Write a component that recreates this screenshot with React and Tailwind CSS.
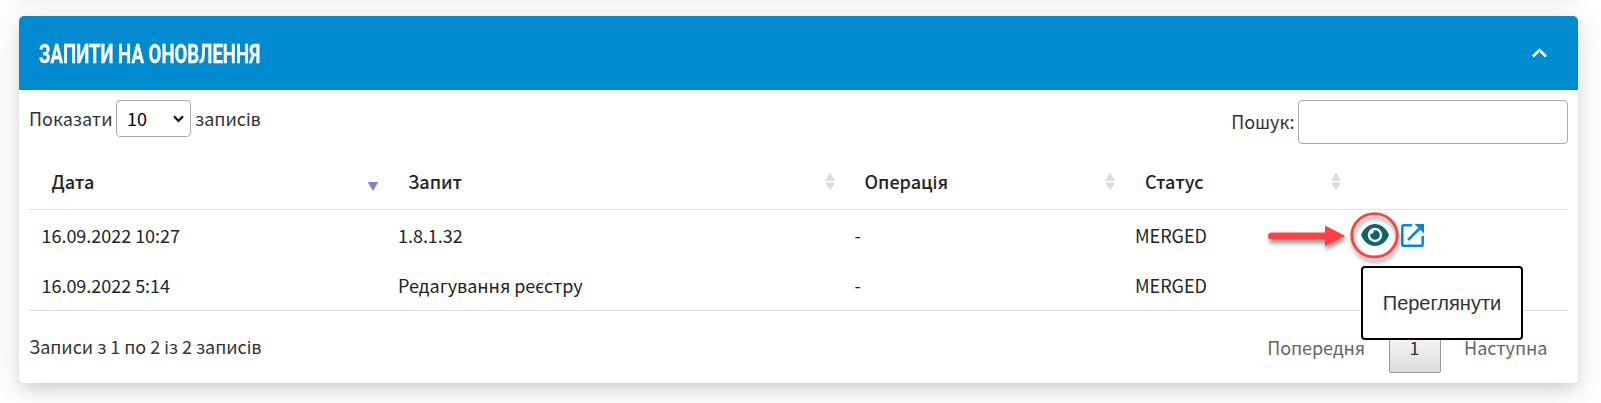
import React from "react";

const columns = [
  { title: "Дата", sort: "desc" },
  { title: "Запит", sort: "both" },
  { title: "Операція", sort: "both" },
  { title: "Статус", sort: "both" },
  { title: "", sort: null },
];

const rows = [
  ["16.09.2022 10:27", "1.8.1.32", "-", "MERGED"],
  ["16.09.2022 5:14", "Редагування реєстру", "-", "MERGED"],
];

const grid = "grid grid-cols-[356.500px_456.500px_280.500px_226px_1fr]";

function SortIcon({ kind }) {
  if (!kind) return null;
  return (
    <svg width="12" height="19" viewBox="0 0 12 19" className="shrink-0">
      {kind === "both" && (
        <>
          <path d="M6 0.5 11 9H1z" fill="#dcdcdc" />
          <path d="M1 10.500h10L6 18.500z" fill="#dcdcdc" />
        </>
      )}
      {kind === "desc" && <path d="M0.700 10h10.600L6 19z" fill="#7f7fe0" />}
    </svg>
  );
}

function EyeIcon() {
  return (
    <svg width="28" height="24" viewBox="0 0 28 24" className="block">
      <path d="M0 12C2.800 5 8 1 14 1s11.200 4 14 11c-2.800 7-8 11-14 11S2.800 19 0 12z" fill="#10646e" />
      <circle cx="14" cy="12" r="7.200" fill="#fff" />
      <path d="M14 7.200a4.800 4.800 0 1 1-4.800 4.800c0-.5.1-.9.200-1.300a2.600 2.600 0 0 0 3.300-3.300c.4-.1.8-.2 1.300-.2z" fill="#10646e" />
    </svg>
  );
}

function ExternalIcon() {
  return (
    <svg width="23" height="23" viewBox="0 0 23 23" className="block" fill="none" stroke="#008bd2" strokeWidth="2.500">
      <path d="M11 1.300H2.300a1 1 0 0 0-1 1v18.400a1 1 0 0 0 1 1h18.400a1 1 0 0 0 1-1V12" />
      <path d="M7 16 20 3" />
      <path d="M13.500 0H23v9.500z" fill="#008bd2" stroke="none" />
    </svg>
  );
}

function Callout() {
  return (
    <svg
      width="140"
      height="60"
      viewBox="0 0 140 60"
      className="pointer-events-none absolute -left-[85px] -top-[11px] drop-shadow-[1px_4px_2px_rgba(0,0,0,0.4)]"
    >
      <path d="M7.500 20.500H61V13.500L81.500 24 61 34V27.500H7.500a3.500 3.500 0 0 1 0-7z" fill="#ff4141" />
      <ellipse cx="110.500" cy="23.300" rx="22.700" ry="21.700" fill="none" stroke="#ff4141" strokeWidth="2.800" />
    </svg>
  );
}

export default function App() {
  return (
    <div className="h-[403px] overflow-hidden bg-white pl-[19px] pr-[23px] font-['Noto_Sans_CJK_SC','Noto_Sans',sans-serif] text-[18px] text-[#212529]">
      <div className="-mt-5 h-5 shadow-[0_0_24px_rgba(0,0,0,0.06),0_-2px_6px_rgba(0,0,0,0.1)]" />
      <section className="relative mt-4 h-[367px] rounded-[5px] bg-white shadow-[0_8px_16px_-4px_rgba(0,0,0,0.14),0_6px_32px_4px_rgba(0,0,0,0.09)]">
        <header className="flex h-[74px] items-center justify-between rounded-t-[5px] bg-[#008bd0] pl-5 pr-[31px]">
          <h2 className="mt-0.5 origin-left scale-x-[0.716] whitespace-nowrap font-['Roboto',sans-serif] text-[26px] font-bold leading-none text-white [-webkit-text-stroke:0.300px_white]">
            ЗАПИТИ НА ОНОВЛЕННЯ
          </h2>
          <svg width="15" height="10" viewBox="0 0 15 10" fill="none" stroke="#fff" strokeWidth="2.600">
            <path d="M1 8.500 7.500 2 14 8.500" />
          </svg>
        </header>

        <div className="px-[10px] pt-[10px]">
          <div className="flex h-11 items-start justify-between">
            <label className="flex h-[37px] items-center gap-1 whitespace-nowrap text-[#333]">
              <span className="w-[83px]">Показати</span>
              <span className="flex h-[37px] w-[75px] items-center justify-between rounded-[4px] border border-[#aaa] pl-[10px] pr-[6px] text-black">
                10
                <svg width="11" height="8" viewBox="0 0 11 8" fill="none" stroke="#000" strokeWidth="2">
                  <path d="M1 1.200 5.500 6 10 1.200" />
                </svg>
              </span>
              <span>записів</span>
            </label>
            <label className="flex h-11 items-center whitespace-nowrap text-[#333]">
              <span className="-mt-0.5 mr-[3.500px]">Пошук:</span>
              <span className="h-11 w-[270px] rounded-[4px] border border-[#aaa]" />
            </label>
          </div>

          <div className={`${grid} mt-[10px] h-[56px] border-b border-[#dee0e2] font-medium`}>
            {columns.map((c, i) => (
              <div key={i} className="flex items-center justify-between pl-[22.500px] pr-[6.500px]">
                <span>{c.title}</span>
                <SortIcon kind={c.sort} />
              </div>
            ))}
          </div>

          <div className="h-[101px] border-b border-[#dcdce2]">
            {rows.map((r, i) => (
              <div key={i} className={`${grid} h-[50px] items-center`}>
                {r.map((cell, j) => (
                  <div key={j} className="pl-[12.500px] leading-[50px] tracking-[-0.030px] whitespace-nowrap">
                    {cell}
                  </div>
                ))}
                {i === 0 && (
                  <div className="relative flex items-center gap-3 pl-[12.500px]">
                    <EyeIcon />
                    <ExternalIcon />
                    <Callout />
                  </div>
                )}
              </div>
            ))}
          </div>

          <footer className="flex h-[72px] items-center justify-between whitespace-nowrap text-[#333]">
            <span className="-mt-0.5 tracking-[-0.030px]">Записи з 1 по 2 із 2 записів</span>
            <nav className="flex items-center pr-[20.500px] text-[#666]">
              <span className="tracking-[-0.080px]">Попередня</span>
              <span className="ml-[23.500px] flex h-[51px] w-[52px] items-center justify-center rounded-[2px] border border-[#979797] bg-linear-to-b from-white to-[#dcdcdc] text-[#333]">
                1
              </span>
              <span className="ml-[23.500px]">Наступна</span>
            </nav>
          </footer>
        </div>

        <div className="absolute left-[1342px] top-[250px] flex h-[74px] w-[162px] items-center justify-center rounded-[4px] border-2 border-black bg-white font-['Liberation_Sans',sans-serif] text-[20px] text-[#333]">
          Переглянути
        </div>
      </section>
    </div>
  );
}
